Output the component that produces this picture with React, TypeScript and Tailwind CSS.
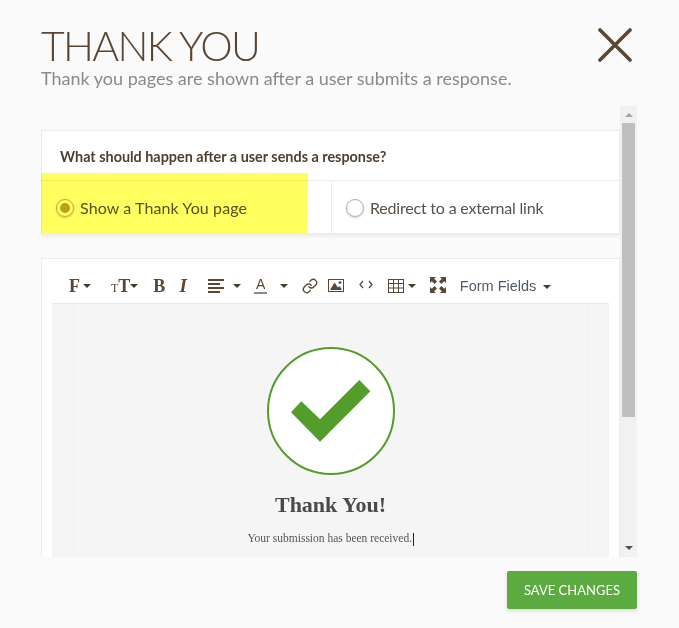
import { Link } from "lucide-react";

const BROWN = "#5a4632";

function Caret({ className = "" }: { className?: string }) {
  return <span className={`inline-block h-0 w-0 border-x-[4px] border-t-[4px] border-x-transparent border-t-[#4a3a2a] ${className}`} />;
}

function CloseIcon() {
  return (
    <svg width="34" height="34" viewBox="0 0 34 34" fill="none" stroke={BROWN} strokeWidth="3.6" strokeLinecap="round">
      <path d="M2 2 L32 32 M32 2 L2 32" />
    </svg>
  );
}

function AlignIcon() {
  return (
    <svg width="16" height="14" viewBox="0 0 16 14" fill={BROWN}>
      <rect x="0" y="0" width="16" height="2" />
      <rect x="0" y="4" width="12" height="2" />
      <rect x="0" y="8" width="16" height="2" />
      <rect x="0" y="12" width="12" height="2" />
    </svg>
  );
}

function PictureIcon() {
  return (
    <svg width="16" height="13" viewBox="0 0 16 13">
      <rect x="0.5" y="0.5" width="15" height="12" fill="#fff" stroke={BROWN} />
      <circle cx="12" cy="3.6" r="1.4" fill={BROWN} />
      <path d="M2 11 L6.5 3.5 L10 8.5 L11.5 7 L14 11 Z" fill={BROWN} />
    </svg>
  );
}

function CodeIcon() {
  return (
    <svg width="14" height="9" viewBox="0 0 14 9" fill="none" stroke={BROWN} strokeWidth="1.2">
      <path d="M4 1 L1 4.5 L4 8" />
      <path d="M10 1 L13 4.5 L10 8" />
    </svg>
  );
}

function TableIcon() {
  return (
    <svg width="16" height="14" viewBox="0 0 16 14" fill="none" stroke={BROWN}>
      <rect x="0.5" y="0.5" width="15" height="13" />
      <path d="M0.5 4.5H15.5M0.5 9H15.5M5.5 0.5V13.5M10.5 0.5V13.5" />
    </svg>
  );
}

function ExpandIcon() {
  return (
    <svg width="16" height="16" viewBox="0 0 16 16" fill={BROWN}>
      <path d="M0 0H6L4.2 1.8L7 4.6L4.6 7L1.8 4.2L0 6Z" />
      <path d="M16 0V6L14.2 4.2L11.4 7L9 4.6L11.8 1.8L10 0Z" />
      <path d="M0 16V10L1.8 11.8L4.6 9L7 11.4L4.2 14.2L6 16Z" />
      <path d="M16 16H10L11.8 14.2L9 11.4L11.4 9L14.2 11.8L16 10Z" />
    </svg>
  );
}

function Toolbar() {
  return (
    <div className="flex h-[43px] items-center pl-[27px] pt-[8px] text-[#5a4632]">
      <span className="font-['Liberation_Serif'] text-[18px] font-bold leading-none">F</span>
      <Caret className="ml-[3px]" />
      <span className="ml-[20px] flex items-baseline font-['Liberation_Serif'] font-bold leading-none">
        <span className="text-[12px] font-normal">T</span>
        <span className="text-[18px]">T</span>
      </span>
      <Caret className="ml-[0px]" />
      <span className="ml-[15px] font-['Liberation_Serif'] text-[18px] font-bold leading-none">B</span>
      <span className="ml-[14px] font-['Liberation_Serif'] text-[19px] font-bold italic leading-none">I</span>
      <span className="ml-[21px]"><AlignIcon /></span>
      <Caret className="ml-[9px]" />
      <span className="ml-[13px] flex w-[14px] flex-col items-center font-['Liberation_Sans'] text-[14px] leading-[13px]">
        A
        <span className="mt-[1px] h-[2px] w-[13px] bg-[#8a8a8a]" />
      </span>
      <Caret className="ml-[12px]" />
      <Link size={16} strokeWidth={2} color={BROWN} className="ml-[14px]" />
      <span className="ml-[10px]"><PictureIcon /></span>
      <span className="mb-[3px] ml-[15px]"><CodeIcon /></span>
      <span className="ml-[15px] mt-[1px]"><TableIcon /></span>
      <Caret className="ml-[4px]" />
      <span className="mb-[2px] ml-[14px]"><ExpandIcon /></span>
      <span className="ml-[14px] mt-[2px] font-['Liberation_Sans'] text-[14.5px] text-[#4f5b66]">Form Fields</span>
      <Caret className="ml-[7px] mt-[2px]" />
    </div>
  );
}

export default function App() {
  return (
    <div className="relative h-[628px] w-[679px] overflow-hidden bg-[#fafafa] font-['Lato',sans-serif]">
      <div className="flex items-start justify-between pl-[41px] pr-[47px] pt-[22px]">
        <div>
          <h1 className="h-[48px] text-[41px] font-light leading-[48px] tracking-[-1.7px] text-[#5a4632]">THANK YOU</h1>
          <p className="-mt-[2px] mb-[2px] text-[18px] leading-[20px] text-[#8f8690]">
            Thank you pages are shown after a user submits a response.
          </p>
        </div>
        <div className="mt-[6px]"><CloseIcon /></div>
      </div>

      <div className="ml-[41px] mt-[16px] flex h-[451px] w-[596px]">
        <div className="h-full w-[579px] overflow-hidden pt-[24px]">
          <section className="h-[104px] border border-[#eeeae8] bg-white shadow-[0_2px_4px_rgba(0,0,0,0.07)]">
            <div className="flex h-[49px] items-center pl-[18px] pt-[3px] text-[14.4px] font-bold text-[#4f3f30]">
              What should happen after a user sends a response?
            </div>
            <div className="flex h-[53px] border-t border-[#eeeae8] text-[16px] text-[#5a5048]">
              <label className="flex w-[289px] items-center pl-[14px] pt-[1px]">
                <span className="flex h-[18px] w-[18px] items-center justify-center rounded-full border border-[#b8ab9c] shadow-[0_1px_2px_rgba(0,0,0,0.2)]">
                  <span className="h-[10px] w-[10px] rounded-full bg-[#b8a23a]" />
                </span>
                <span className="ml-[6px] tracking-[0.1px]">Show a Thank You page</span>
              </label>
              <label className="flex flex-1 items-center border-l border-[#eeeae8] pl-[14px] pt-[1px]">
                <span className="h-[18px] w-[18px] rounded-full border border-[#b8ab9c] shadow-[0_1px_2px_rgba(0,0,0,0.2)]" />
                <span className="ml-[6px] tracking-[-0.2px]">Redirect to a external link</span>
              </label>
            </div>
          </section>

          <section className="mt-[24px] h-[320px] border border-[#eeeae8] bg-white px-[10px]">
            <div className="-mx-[10px] mt-[1px]"><Toolbar /></div>
            <div className="h-[260px] border-t border-[#ebe8e6] bg-[#f5f5f5] px-[21px]">
              <div className="flex h-full flex-col items-center border-x border-[#f1f1f1] pt-[43px]">
                <div className="flex h-[128px] w-[128px] items-center justify-center rounded-full border-2 border-[#539e2b] bg-white">
                  <svg width="80" height="62" viewBox="0 0 80 62" fill="#539e2b">
                    <path d="M0 32.3 L10.3 21.3 L29 39.3 L68.3 0 L79.3 11.3 L29 61.7 Z" />
                  </svg>
                </div>
                <h2 className="mt-[16px] font-['Liberation_Serif'] text-[22px] font-bold leading-[28px] text-[#4a4a4a]">Thank You!</h2>
                <p className="mt-[12px] font-['Liberation_Serif'] text-[11.5px] leading-[14px] text-[#555]">
                  Your submission has been received.<span className="ml-[0.5px] inline-block h-[13px] w-px bg-[#222] align-middle" />
                </p>
              </div>
            </div>
          </section>
        </div>

        <div className="relative h-full w-[17px] bg-[#f1f1f1]">
          <span className="absolute left-[5px] top-[7px] h-0 w-0 border-x-[4px] border-b-[4px] border-x-transparent border-b-[#a3a3a3]" />
          <div className="absolute left-[2px] top-[17px] h-[294px] w-[13px] bg-[#bfbfbf]" />
          <span className="absolute bottom-[7px] left-[5px] h-0 w-0 border-x-[4px] border-t-[4px] border-x-transparent border-t-[#505050]" />
        </div>
      </div>

      <div className="flex justify-end pr-[42px] pt-[14px]">
        <button className="h-[38px] w-[130px] rounded-[2px] bg-[#5cab41] pt-[1px] font-['Lato'] text-[13px] text-white shadow-[0_2px_4px_rgba(0,0,0,0.12)]">
          SAVE CHANGES
        </button>
      </div>

      <div className="pointer-events-none absolute left-[41px] top-[173px] h-[60px] w-[267px] bg-[#ffff5f] mix-blend-multiply" />
    </div>
  );
}
